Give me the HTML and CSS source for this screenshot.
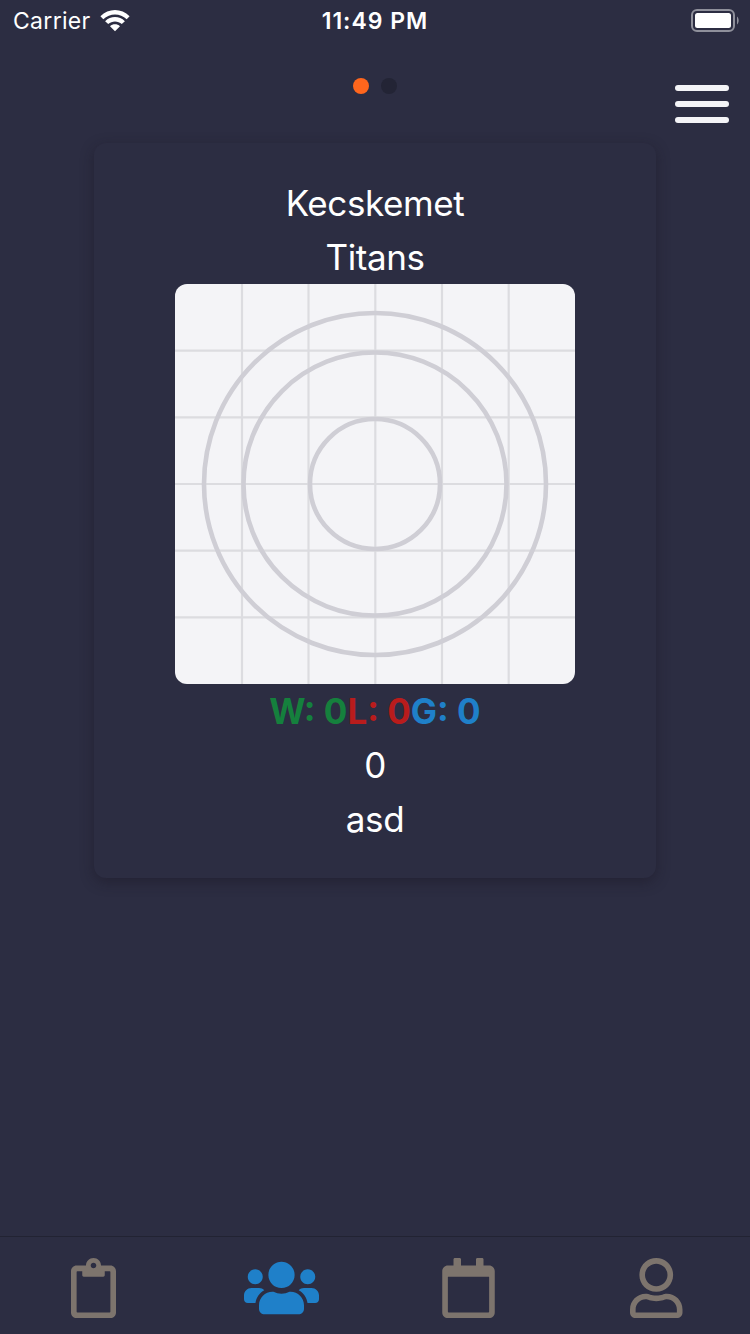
FILE: index.html
```html
<!DOCTYPE html>
<html lang="en">
<head>
<meta charset="utf-8">
<title>Teams</title>
<link rel="stylesheet" href="styles.css">
</head>
<body>
<div class="app">
  <header class="status">
    <div class="status-left">
      <span class="carrier">Carrier</span>
      <svg class="wifi" width="30" height="23" viewBox="0 0 30 23" fill="#fff">
        <path d="M0.4 7.3C8.5-1.1 21.5-1.1 29.6 7.3L26.7 10.3C20.2 3.8 9.8 3.8 3.3 10.3Z"/>
        <path d="M5.1 12.2C10.6 6.7 19.4 6.7 24.9 12.2L21.8 15.1C18 11.5 12 11.5 8.2 15.1Z"/>
        <path d="M10 17.2C12.8 14.6 17.2 14.6 20 17.2L15 22.2Z"/>
      </svg>
    </div>
    <span class="clock">11:49 PM</span>
    <div class="status-right">
      <svg width="48" height="23" viewBox="0 0 48 23">
        <rect x="1" y="1" width="42" height="21" rx="5" fill="none" stroke="#8f909b" stroke-width="2"/>
        <rect x="4" y="4" width="36" height="15" rx="2.5" fill="#fff"/>
        <path d="M46 7.5C48.2 9 48.2 14 46 15.5Z" fill="#8f909b"/>
      </svg>
    </div>
  </header>
  <div class="toolbar">
    <div class="dots"><i class="dot dot-on"></i><i class="dot"></i></div>
    <div class="menu"><i class="bar"></i><i class="bar"></i><i class="bar"></i></div>
  </div>
  <main class="content">
    <section class="card">
      <div class="line">Kecskemet</div>
      <div class="line">Titans</div>
      <svg class="logo" width="400" height="400" viewBox="0 0 400 400" fill="none">
        <path d="M67 0V400M133.5 0V400M200.3 0V400M267 0V400M333.7 0V400M0 66.7H400M0 133.4H400M0 200H400M0 266.7H400M0 333.3H400" stroke="#dcdce0" stroke-width="2.2"/>
        <g stroke="#cfced5" stroke-width="4.6">
          <circle cx="200" cy="200" r="171"/>
          <circle cx="200" cy="200" r="131.5"/>
          <circle cx="200" cy="200" r="65"/>
        </g>
      </svg>
      <div class="line score"><span class="win">W: 0</span><span class="loss">L: 0</span><span class="games">G: 0</span></div>
      <div class="line">0</div>
      <div class="line">asd</div>
    </section>
  </main>
  <nav class="tabs">
    <div class="tab"><svg class="icon" viewBox="0 0 384 512" width="45" height="60"><path d="M336 64h-80c0-35.3-28.7-64-64-64s-64 28.7-64 64H48C21.5 64 0 85.5 0 112v352c0 26.5 21.5 48 48 48h288c26.5 0 48-21.5 48-48V112c0-26.5-21.5-48-48-48zM192 40c13.3 0 24 10.7 24 24s-10.7 24-24 24-24-10.7-24-24 10.7-24 24-24zm144 418c0 3.3-2.7 6-6 6H54c-3.3 0-6-2.7-6-6V118c0-3.3 2.7-6 6-6h42v36c0 6.6 5.4 12 12 12h168c6.6 0 12-5.4 12-12v-36h42c3.3 0 6 2.7 6 6z"/></svg></div>
    <div class="tab tab-on"><svg class="icon" viewBox="0 0 640 512" width="75" height="60"><path d="M96 224c35.3 0 64-28.7 64-64s-28.7-64-64-64-64 28.7-64 64 28.7 64 64 64zm448 0c35.3 0 64-28.7 64-64s-28.7-64-64-64-64 28.7-64 64 28.7 64 64 64zm32 32h-64c-17.6 0-33.5 7.1-45.1 18.6 40.3 22.1 68.9 62 75.1 109.4h66c17.7 0 32-14.3 32-32v-32c0-35.3-28.7-64-64-64zm-256 0c61.9 0 112-50.1 112-112S381.9 32 320 32 208 82.1 208 144s50.1 112 112 112zm76.8 32h-8.3c-20.8 10-43.9 16-68.5 16s-47.6-6-68.5-16h-8.3C179.6 288 128 339.6 128 403.2V432c0 26.5 21.5 48 48 48h288c26.5 0 48-21.5 48-48v-28.8c0-63.6-51.6-115.2-115.2-115.2zm-223.7-13.4C161.5 263.1 145.6 256 128 256H64c-35.3 0-64 28.7-64 64v32c0 17.7 14.3 32 32 32h65.9c6.3-47.4 34.9-87.3 75.2-109.4z"/></svg></div>
    <div class="tab"><svg class="icon" viewBox="0 0 448 512" width="53" height="60"><path d="M400 64h-48V12c0-6.6-5.4-12-12-12h-40c-6.6 0-12 5.4-12 12v52H160V12c0-6.6-5.4-12-12-12h-40c-6.6 0-12 5.4-12 12v52H48C21.5 64 0 85.5 0 112v352c0 26.5 21.5 48 48 48h352c26.5 0 48-21.5 48-48V112c0-26.5-21.5-48-48-48zm-6 400H54c-3.3 0-6-2.7-6-6V160h352v298c0 3.3-2.7 6-6 6z"/></svg></div>
    <div class="tab"><svg class="icon" viewBox="0 0 448 512" width="52.5" height="60"><path d="M313.6 304c-28.7 0-42.5 16-89.6 16-47.1 0-60.8-16-89.6-16C60.2 304 0 364.2 0 438.4V464c0 26.5 21.5 48 48 48h352c26.5 0 48-21.5 48-48v-25.6c0-74.2-60.2-134.4-134.4-134.4zM400 464H48v-25.6c0-47.6 38.8-86.4 86.4-86.4 14.6 0 38.3 16 89.6 16 51.7 0 74.9-16 89.6-16 47.6 0 86.4 38.8 86.4 86.4V464zM224 288c79.5 0 144-64.5 144-144S303.5 0 224 0 80 64.5 80 144s64.5 144 144 144zm0-240c52.9 0 96 43.1 96 96s-43.1 96-96 96-96-43.1-96-96 43.1-96 96-96z"/></svg></div>
  </nav>
</div>
</body>
</html>
```
FILE: styles.css
```css
* { box-sizing: border-box; }
body { margin: 0; background: #2c2d42; color: #fff; font-family: Inter, "Liberation Sans", sans-serif; }
.app { width: 750px; height: 1334px; display: flex; flex-direction: column; }
.status { height: 40px; display: grid; grid-template-columns: 1fr auto 1fr; align-items: center; padding: 0 11px 0 13px; font-size: 23px; line-height: 38px; }
.status-left { display: flex; align-items: center; gap: 9px; }
.carrier { padding-top: 2px; letter-spacing: 0.3px; }
.clock { padding-top: 2px; font-weight: 600; letter-spacing: 1px; margin-right: 2px; }
.status-right { display: flex; justify-content: flex-end; }
.toolbar { height: 103px; display: grid; grid-template-columns: 1fr auto 1fr; align-items: start; padding: 38px 21px 0; }
.dots { grid-column: 2; display: flex; gap: 12px; }
.dot { width: 16px; height: 16px; border-radius: 50%; background: #232435; }
.dot-on { background: #ff661d; }
.menu { justify-self: end; display: flex; flex-direction: column; gap: 10px; padding-top: 7px; }
.bar { width: 54px; height: 6px; border-radius: 3px; background: #f4f4f7; }
.content { flex: 1; display: flex; justify-content: center; align-items: flex-start; }
.card { width: 562px; height: 735px; padding-top: 33px; border-radius: 12px; background: #2c2d42; box-shadow: 0 4px 14px rgba(24, 20, 30, 0.42); display: flex; flex-direction: column; align-items: center; }
.line { height: 54px; line-height: 54px; font-size: 35px; letter-spacing: -0.4px; white-space: nowrap; }
.logo { flex: none; display: block; border-radius: 12px; background: #f4f4f7; }
.score { display: flex; font-weight: 700; letter-spacing: 0; }
.win { color: #15803d; }
.loss { color: #b91c1c; }
.games { color: #1f80c9; }
.tabs { height: 98px; display: grid; grid-template-columns: repeat(4, 1fr); border-top: 1px solid #222333; padding-top: 21px; }
.tab { display: flex; justify-content: center; align-items: flex-start; color: #7d746d; }
.tab-on { color: #1f80c9; }
.icon { display: block; fill: currentColor; }
```
